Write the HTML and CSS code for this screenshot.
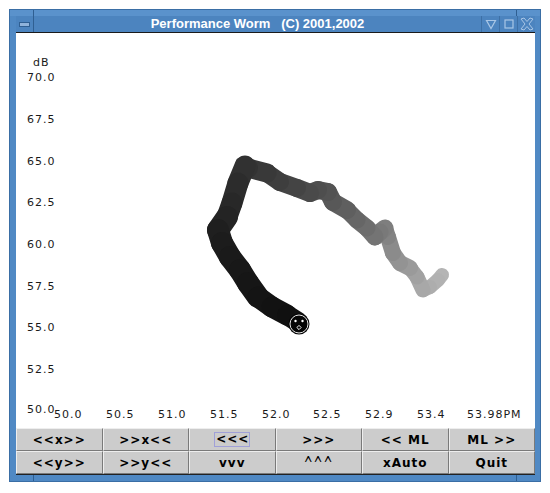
FILE: index.html
```
<!DOCTYPE html>
<html lang="en">
<head>
  <meta charset="UTF-8">
  <title>Performance Worm</title>
  <link rel="stylesheet" href="styles.css">
</head>
<body>
  <div class="window">
    <div class="frame-edge">
      <div class="corner left"></div>
      <div class="edge-mid"></div>
      <div class="corner right"></div>
    </div>
    <div class="titlebar">
      <div class="tb-btn menu"><span class="menu-bar"></span></div>
      <div class="title">Performance Worm   (C) 2001,2002</div>
      <div class="tb-btn">
        <svg width="12" height="12" viewBox="0 0 12 12"><path d="M1.5 2.5 L10.5 2.5 L6 10.5 Z" fill="none" stroke="#a9c6e6" stroke-width="1.2"/></svg>
      </div>
      <div class="tb-btn">
        <svg width="12" height="12" viewBox="0 0 12 12"><rect x="2" y="2" width="8" height="8" fill="none" stroke="#a9c6e6" stroke-width="1.2"/></svg>
      </div>
      <div class="tb-btn">
        <svg width="14" height="14" viewBox="0 0 14 14"><path d="M1 2 L4 1 L7 4.5 L10 1 L13 2 L9 7 L13 12 L10 13 L7 9.5 L4 13 L1 12 L5 7 Z" fill="none" stroke="#a9c6e6" stroke-width="1"/></svg>
      </div>
    </div>

    <div class="plot">
      <svg width="519" height="395" viewBox="16 33 519 395">
        <g class="axis">
          <text x="33" y="66">dB</text>
          <text x="27" y="81">70.0</text>
          <text x="27" y="123">67.5</text>
          <text x="27" y="165">65.0</text>
          <text x="27" y="206">62.5</text>
          <text x="27" y="248">60.0</text>
          <text x="27" y="290">57.5</text>
          <text x="27" y="331">55.0</text>
          <text x="27" y="373">52.5</text>
          <text x="27" y="413">50.0</text>

          <text x="54" y="418">50.0</text>
          <text x="106" y="418">50.5</text>
          <text x="158" y="418">51.0</text>
          <text x="210" y="418">51.5</text>
          <text x="262" y="418">52.0</text>
          <text x="313" y="418">52.5</text>
          <text x="365" y="418">52.9</text>
          <text x="417" y="418">53.4</text>
          <text x="467" y="418">53.98PM</text>
        </g>

        <!-- worm, drawn tail first so the head sits on top -->
        <g class="worm">
          <line x1="442" y1="275" x2="438" y2="280" stroke="#b4b4b4" stroke-width="14"/>
          <line x1="438" y1="280" x2="430" y2="287" stroke="#b1b1b1" stroke-width="14"/>
          <line x1="430" y1="287" x2="423" y2="290" stroke="#adadad" stroke-width="14"/>
          <line x1="423" y1="290" x2="417" y2="277" stroke="#a8a8a8" stroke-width="15"/>
          <line x1="417" y1="277" x2="410" y2="268" stroke="#a1a1a1" stroke-width="15"/>
          <line x1="410" y1="268" x2="400" y2="263" stroke="#9a9a9a" stroke-width="16"/>
          <line x1="400" y1="263" x2="393" y2="253" stroke="#939393" stroke-width="16"/>
          <line x1="393" y1="253" x2="388" y2="237" stroke="#8b8b8b" stroke-width="16"/>
          <line x1="388" y1="237" x2="385" y2="228" stroke="#838383" stroke-width="16"/>
          <line x1="385" y1="228" x2="380" y2="232" stroke="#7e7e7e" stroke-width="17"/>
          <line x1="380" y1="232" x2="375" y2="237" stroke="#797979" stroke-width="17"/>
          <line x1="375" y1="237" x2="367" y2="228" stroke="#747474" stroke-width="17"/>
          <line x1="367" y1="228" x2="357" y2="220" stroke="#6d6d6d" stroke-width="17"/>
          <line x1="357" y1="220" x2="347" y2="210" stroke="#666666" stroke-width="17"/>
          <line x1="347" y1="210" x2="333" y2="202" stroke="#5f5f5f" stroke-width="18"/>
          <line x1="333" y1="202" x2="328" y2="192" stroke="#585858" stroke-width="18"/>
          <line x1="328" y1="192" x2="318" y2="190" stroke="#535353" stroke-width="18"/>
          <line x1="318" y1="190" x2="310" y2="193" stroke="#4e4e4e" stroke-width="18"/>
          <line x1="310" y1="193" x2="297" y2="188" stroke="#4a4a4a" stroke-width="18"/>
          <line x1="297" y1="188" x2="280" y2="182" stroke="#444444" stroke-width="18"/>
          <line x1="280" y1="182" x2="267" y2="173" stroke="#3e3e3e" stroke-width="18"/>
          <line x1="267" y1="173" x2="248" y2="168" stroke="#393939" stroke-width="19"/>
          <line x1="248" y1="168" x2="245" y2="166" stroke="#333333" stroke-width="20"/>
          <line x1="245" y1="166" x2="238" y2="183" stroke="#313131" stroke-width="21"/>
          <line x1="238" y1="183" x2="232" y2="203" stroke="#2c2c2c" stroke-width="21"/>
          <line x1="232" y1="203" x2="227" y2="217" stroke="#282828" stroke-width="21"/>
          <line x1="227" y1="217" x2="218" y2="230" stroke="#242424" stroke-width="22"/>
          <line x1="218" y1="230" x2="222" y2="243" stroke="#1f1f1f" stroke-width="22"/>
          <line x1="222" y1="243" x2="230" y2="257" stroke="#1c1c1c" stroke-width="22"/>
          <line x1="230" y1="257" x2="240" y2="270" stroke="#1a1a1a" stroke-width="22"/>
          <line x1="240" y1="270" x2="248" y2="283" stroke="#181818" stroke-width="22"/>
          <line x1="248" y1="283" x2="258" y2="297" stroke="#161616" stroke-width="22"/>
          <line x1="258" y1="297" x2="272" y2="307" stroke="#141414" stroke-width="21"/>
          <line x1="272" y1="307" x2="287" y2="315" stroke="#121212" stroke-width="21"/>
          <line x1="287" y1="315" x2="298" y2="322" stroke="#101010" stroke-width="20"/>
        </g>
        <g class="head">
          <circle cx="299" cy="324" r="10.5" fill="#050505"/>
          <circle cx="299" cy="324" r="9" fill="none" stroke="#e6e6e6" stroke-width="1"/>
          <circle cx="295.5" cy="321" r="1.2" fill="#ffffff"/>
          <circle cx="302.5" cy="321" r="1.2" fill="#ffffff"/>
          <rect x="297.5" y="326" width="3" height="3" fill="none" stroke="#ffffff" stroke-width="0.9" transform="rotate(45 299 327.5)"/>
        </g>
      </svg>
    </div>

    <div class="controls">
      <button class="btn">&lt;&lt;x&gt;&gt;</button>
      <button class="btn">&gt;&gt;x&lt;&lt;</button>
      <button class="btn"><span class="focus">&lt;&lt;&lt;</span></button>
      <button class="btn">&gt;&gt;&gt;</button>
      <button class="btn">&lt;&lt; ML</button>
      <button class="btn">ML &gt;&gt;</button>
      <button class="btn">&lt;&lt;y&gt;&gt;</button>
      <button class="btn">&gt;&gt;y&lt;&lt;</button>
      <button class="btn">vvv</button>
      <button class="btn"><span class="caret">^^^</span></button>
      <button class="btn">xAuto</button>
      <button class="btn">Quit</button>
    </div>

    <div class="frame-edge bottom">
      <div class="corner left"></div>
      <div class="edge-mid"></div>
      <div class="corner right"></div>
    </div>
  </div>
</body>
</html>
```

FILE: styles.css
```
body {
  margin: 0;
  background: #ffffff;
}
.window {
  margin: 9px 0 0 9px;
  width: 532px;
  box-sizing: border-box;
  background: #5089c4;
  border: 1px solid #3a6ea5;
  padding: 0 5px 0 6px;
  display: flex;
  flex-direction: column;
}
.frame-edge {
  height: 6px;
  margin: 0 -5px 0 -6px;
  display: flex;
  background: #5a92cc;
}
.frame-edge.bottom {
  background: #4f88c3;
}
.frame-edge .corner.left {
  width: 23px;
  border-right: 1px solid #2f5f92;
}
.frame-edge .corner.right {
  width: 23px;
  border-left: 1px solid #2f5f92;
}
.frame-edge .edge-mid {
  flex: 1;
}
.titlebar {
  height: 16px;
  display: flex;
  align-items: stretch;
  background: #4c84bf;
  border-bottom: 1px solid #1a1a1a;
}
.tb-btn {
  width: 17px;
  display: flex;
  align-items: center;
  justify-content: center;
  border-left: 1px solid #3d70a6;
}
.tb-btn.menu {
  border-left: none;
  border-right: 1px solid #2f5f92;
}
.menu-bar {
  width: 9px;
  height: 3px;
  background: #8fb3db;
  border: 1px solid #2f5f92;
}
.title {
  flex: 1;
  text-align: center;
  white-space: pre;
  color: #ffffff;
  font-family: "Liberation Sans", Arial, sans-serif;
  font-weight: bold;
  font-size: 13px;
  line-height: 16px;
}
.plot {
  height: 395px;
  background: #ffffff;
}
.plot svg {
  display: block;
}
.axis text {
  font-family: "DejaVu Sans", sans-serif;
  font-size: 11px;
  letter-spacing: 1px;
  fill: #1a1a1a;
}
.worm line {
  stroke-linecap: round;
}
.controls {
  display: grid;
  grid-template-columns: repeat(6, 1fr);
  grid-template-rows: 23px 23px;
  background: #8a8a8a;
  border-bottom: 1px solid #222222;
}
.btn {
  margin: 0;
  padding: 0;
  box-sizing: border-box;
  height: 23px;
  background: #cccccc;
  border: 1px solid;
  border-color: #eeeeee #7a7a7a #7a7a7a #eeeeee;
  font-family: "DejaVu Sans", sans-serif;
  font-weight: bold;
  font-size: 12px;
  letter-spacing: 1px;
  color: #000000;
  display: flex;
  align-items: center;
  justify-content: center;
}
.btn .focus {
  border: 1px solid #a0a0d8;
  padding: 0 0 0 1px;
  line-height: 13px;
}
.btn .caret {
  display: inline-block;
  font-weight: normal;
  font-size: 12px;
  line-height: 12px;
  transform: scale(0.9, 1.7) translateY(1px);
}
```
